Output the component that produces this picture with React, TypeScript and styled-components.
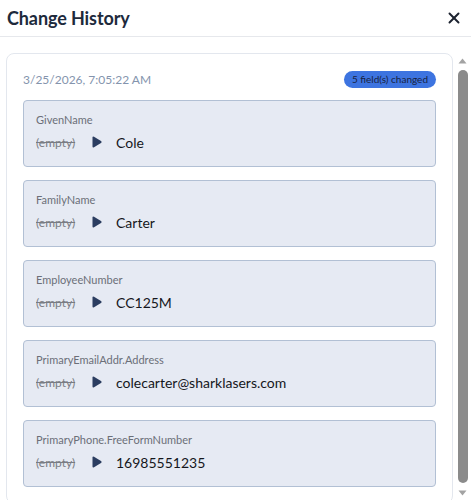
import React from "react";
import styled, { createGlobalStyle } from "styled-components";
import { X } from "lucide-react";

const GlobalStyle = createGlobalStyle`
  html, body {
    margin: 0;
    padding: 0;
    background: #ffffff;
    font-family: Lato, "Open Sans", "Liberation Sans", sans-serif;
  }
`;

const Dialog = styled.div`
  height: 100vh;
  display: flex;
  flex-direction: column;
  background: #ffffff;
`;

const Header = styled.div`
  height: 36px;
  flex: none;
  display: flex;
  align-items: center;
  justify-content: space-between;
  padding: 0 8px 0 7px;
  border-bottom: 1px solid #e6e8ec;
`;

const Title = styled.h2`
  margin: 0;
  font-size: 18px;
  font-weight: 700;
  color: #1d2a3c;
  letter-spacing: -0.1px;
`;

const CloseButton = styled.button`
  border: none;
  background: none;
  padding: 0;
  display: flex;
  color: #1d2330;
  cursor: pointer;
`;

const Body = styled.div`
  flex: 1;
  min-height: 0;
  padding: 16px 1px 0 6px;
  display: flex;
`;

const Scroller = styled.div`
  flex: 1;
  overflow: hidden;
`;

// the page is photographed without native scrollbars, so draw one
const ScrollTrack = styled.div`
  width: 15px;
  flex: none;
  display: flex;
  flex-direction: column;
  align-items: center;
`;

const ScrollButton = styled.div`
  height: 15px;
  width: 15px;
  flex: none;
  display: flex;
  align-items: center;
  justify-content: center;
  color: #a3a3a3;
`;

const Thumb = styled.div`
  flex: 1;
  width: 10px;
  margin: 2px 0;
  border-radius: 5px;
  background: #8b8b8b;
`;

const Card = styled.div`
  margin-right: 2px;
  border: 1px solid #e3e7ee;
  border-radius: 8px;
  padding: 15px 16px 16px;
`;

const CardHead = styled.div`
  display: flex;
  align-items: center;
  justify-content: space-between;
  height: 20px;
  margin-bottom: 11px;
`;

const Stamp = styled.span`
  font-size: 12px;
  color: #8494ad;
`;

const Badge = styled.span`
  height: 17px;
  line-height: 17px;
  padding: 0 8px;
  border-radius: 9px;
  background: #3d74e0;
  color: #182240;
  font-size: 10px;
`;

const FieldList = styled.div`
  display: flex;
  flex-direction: column;
  gap: 13px;
`;

const Field = styled.div`
  background: #e6eaf3;
  border: 1px solid #b2c0d4;
  border-radius: 4px;
  padding: 12px 12px 12px;
  height: 41px;
`;

const Label = styled.div`
  font-size: 11px;
  line-height: 14px;
  color: #6b6f78;
  margin-bottom: 4px;
`;

const Change = styled.div`
  display: flex;
  align-items: center;
  height: 22px;
`;

const OldValue = styled.span`
  font-size: 12px;
  color: #7a7d84;
  text-decoration: line-through;
  width: 56px;
`;

const Arrow = styled.svg`
  width: 10px;
  height: 12px;
  margin-right: 14px;
  color: #2b3d60;
`;

const NewValue = styled.span`
  font-size: 14px;
  color: #15171c;
`;

const changes = [
  { name: "GivenName", value: "Cole" },
  { name: "FamilyName", value: "Carter" },
  { name: "EmployeeNumber", value: "CC125M" },
  { name: "PrimaryEmailAddr.Address", value: "colecarter@sharklasers.com" },
  { name: "PrimaryPhone.FreeFormNumber", value: "16985551235" },
];

export default function App() {
  return (
    <Dialog>
      <GlobalStyle />
      <Header>
        <Title>Change History</Title>
        <CloseButton aria-label="Close">
          <X size={18} strokeWidth={2.6} />
        </CloseButton>
      </Header>
      <Body>
        <Scroller>
          <Card>
            <CardHead>
              <Stamp>3/25/2026, 7:05:22 AM</Stamp>
              <Badge>{changes.length} field(s) changed</Badge>
            </CardHead>
            <FieldList>
              {changes.map((c) => (
                <Field key={c.name}>
                  <Label>{c.name}</Label>
                  <Change>
                    <OldValue>(empty)</OldValue>
                    <Arrow viewBox="0 0 10 12">
                      <path
                        d="M0.5 1.6 Q0.5 0 2 0.7 L9 5 Q10.2 6 9 7 L2 11.3 Q0.5 12 0.5 10.4 Z"
                        fill="currentColor"
                      />
                    </Arrow>
                    <NewValue>{c.value}</NewValue>
                  </Change>
                </Field>
              ))}
            </FieldList>
          </Card>
        </Scroller>
        <ScrollTrack>
          <ScrollButton>
            <svg width="9" height="6" viewBox="0 0 9 6">
              <path d="M4.5 0.5 L8.5 5.5 L0.5 5.5 Z" fill="currentColor" />
            </svg>
          </ScrollButton>
          <Thumb />
          <ScrollButton>
            <svg width="9" height="6" viewBox="0 0 9 6">
              <path d="M0.5 0.5 L8.5 0.5 L4.5 5.5 Z" fill="currentColor" />
            </svg>
          </ScrollButton>
        </ScrollTrack>
      </Body>
    </Dialog>
  );
}
